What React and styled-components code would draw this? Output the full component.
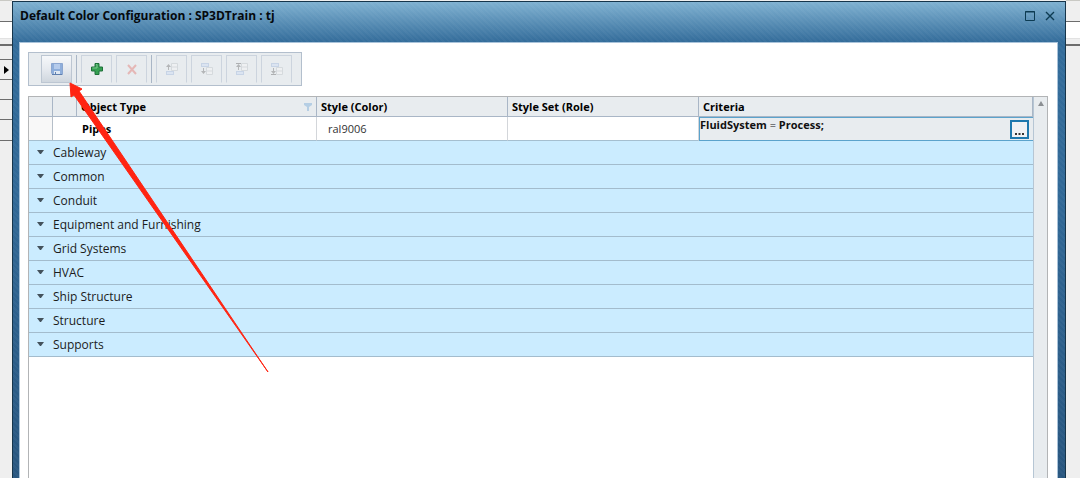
import React, { useState } from 'react';
import styled, { createGlobalStyle } from 'styled-components';

const GlobalStyle = createGlobalStyle`
  * { box-sizing: border-box; }
  body {
    margin: 0;
    background: #efefef;
    font-family: "Open Sans", "Noto Sans", sans-serif;
    font-size: 12px;
    color: #1c1c1c;
  }
  button { font-family: inherit; padding: 0; }
`;

const Desktop = styled.div`
  position: relative;
  display: flex;
  height: 100vh;
  overflow: hidden;
`;

const Gutter = styled.div`
  flex: none;
  width: ${props => props.width}px;
  border-top: 1px solid #c9c9c4;
`;

const GutterCell = styled.div`
  display: flex;
  align-items: center;
  justify-content: flex-end;
  padding-right: 3px;
  height: ${props => props.height}px;
  background: ${props => props.fill || '#efefef'};
  border-bottom: ${props => props.line || 1}px solid ${props => props.color || '#6d6d6d'};
`;

const Window = styled.main`
  flex: 1;
  min-width: 0;
  display: flex;
  flex-direction: column;
  margin-top: 1px;
  padding: 0 7px 0 6px;
  border: 1px solid #16354b;
  border-bottom: 0;
  background:
    repeating-linear-gradient(45deg, rgba(255, 255, 255, 0.03) 0 2px, transparent 2px 4px),
    linear-gradient(#7fb1d1 0, #336c9a 40px, #316896 200px, #28567f 100%);
`;

const TitleBar = styled.header`
  display: flex;
  align-items: flex-start;
  justify-content: space-between;
  height: 40px;
  flex: none;
  padding: 5px 3px 0 1px;
`;

const Title = styled.h1`
  margin: 0;
  font-size: 12px;
  line-height: 18px;
  font-weight: 700;
  color: #05090d;
`;

const WindowButtons = styled.div`
  display: flex;
  gap: 10px;
  padding-top: 4px;
`;

const WindowButton = styled.button`
  display: flex;
  border: 0;
  background: none;
`;

const Body = styled.section`
  flex: 1;
  min-height: 0;
  display: flex;
  flex-direction: column;
  gap: 10px;
  padding: 9px 9px 0 8px;
  background: #fff;
  border: 1px solid #a9c3da;
  border-bottom: 0;
`;

const Toolbar = styled.div`
  display: flex;
  align-self: flex-start;
  gap: 4px;
  height: 34px;
  padding: 2px 9px 2px 12px;
  background: #e8ecef;
  border: 1px solid #b3bfcd;
`;

const Separator = styled.span`
  width: 1px;
  background: #a9b6c6;
`;

const ToolButton = styled.button`
  display: flex;
  align-items: center;
  justify-content: center;
  width: 31px;
  border: 1px solid ${props => props.$active ? '#bcc6d2' : '#ccd4de'};
  border-bottom-color: ${props => props.$active ? '#bcc6d2' : '#e8ecef'};
  background: ${props => props.$active ? 'linear-gradient(#f6f8fa, #e6eaef 50%, #cfd6de)' : '#e8ecef'};
  svg { opacity: ${props => props.disabled ? 0.35 : 1}; }
`;

const GridFrame = styled.div`
  flex: 1;
  min-height: 0;
  display: flex;
  border: 1px solid #b2b4b6;
  border-bottom: 0;
`;

const GridScroll = styled.div`
  flex: 1;
  min-width: 0;
  overflow: hidden;
`;

const ScrollTrack = styled.div`
  flex: none;
  width: 14px;
  background: #e8ecef;
  border-left: 1px solid #b6c6d4;
`;

const ScrollUp = styled.button`
  display: flex;
  justify-content: center;
  width: 100%;
  padding-top: 4px;
  border: 0;
  background: none;
`;

const Table = styled.table`
  width: 100%;
  table-layout: fixed;
  border-collapse: separate;
  border-spacing: 0;
`;

const Col = styled.col`
  width: ${props => props.$w ? `${props.$w}px` : 'auto'};
`;

const Th = styled.th`
  height: 20px;
  padding: 0 4px;
  background: #e8ecef;
  border-right: 1px solid #a9b6c6;
  border-bottom: 1px solid #a9b6c6;
  text-align: left;
  font-size: 11px;
  line-height: 18px;
  color: #000;
`;

const HeadLabel = styled.span`
  display: flex;
  align-items: center;
  justify-content: space-between;
`;

const Td = styled.td`
  height: 24px;
  padding: 0 0 0 ${props => props.$pad || 0}px;
  background: ${props => props.$shade ? '#f8f8f8' : '#fff'};
  border-right: 1px solid ${props => props.$shade ? '#b5bec8' : '#d3d6da'};
  border-bottom: 1px solid #a5bfd0;
  font-size: 11px;
  line-height: 18px;
  font-weight: ${props => props.$bold ? 700 : 400};
  color: ${props => props.$bold ? '#000' : '#333'};
`;

const CriteriaTd = styled.td`
  height: 24px;
  padding: 0;
  background: #e8ecef;
  border: 1px solid #5ba3cc;
  border-right: 0;
`;

const Criteria = styled.div`
  display: flex;
  justify-content: space-between;
  height: 22px;
  padding-right: 4px;
  font-size: 11px;
  line-height: 14px;
  font-weight: 700;
  color: #111;
  span { font-weight: 400; }
`;

const MoreButton = styled.button`
  align-self: center;
  display: flex;
  align-items: flex-end;
  justify-content: center;
  width: 19px;
  height: 19px;
  padding-bottom: 2px;
  border: 2px solid #1c77ad;
  background: #eef1f4;
`;

const GroupTd = styled.td`
  height: 24px;
  padding: 0;
  background: #cbecff;
  border-bottom: 1px solid #a3bccd;
`;

const GroupButton = styled.button`
  display: flex;
  align-items: center;
  gap: 9px;
  width: 100%;
  height: 22px;
  padding-left: 8px;
  border: 0;
  background: none;
  text-align: left;
  font-size: 12px;
  line-height: 18px;
  color: #1c1c1c;
  svg { margin-bottom: 2px; }
`;

const Pointer = styled.svg`
  position: absolute;
  left: 0;
  top: 0;
  pointer-events: none;
`;

const groups = [
  'Cableway',
  'Common',
  'Conduit',
  'Equipment and Furnishing',
  'Grid Systems',
  'HVAC',
  'Ship Structure',
  'Structure',
  'Supports'
];

const SaveIcon = () => (
  <svg width="12" height="12" viewBox="0 0 12 12">
    <path d="M1 .5h10.5v11H2L.5 10V.5z" fill="#8eaedb" stroke="#8ba6d0" />
    <path d="M3 1h6v5H3z" fill="#b5cbeb" />
    <path d="M3 8h6v3H3z" fill="#dfe8f3" />
    <path d="M4 9h1v2H4zM1 11h10v1H1z" fill="#5f7fae" />
  </svg>
);

const AddIcon = () => (
  <svg width="12" height="12" viewBox="0 0 12 12">
    <path d="M4 .5h4V4h3.500v4H8v3.500H4V8H.5V4H4z" fill="#35a052" stroke="#1f713a" />
    <path d="M5 1.500h1V5H1.500" fill="none" stroke="#7cc98e" />
  </svg>
);

const DeleteIcon = () => (
  <svg width="10" height="11" viewBox="0 0 10 11">
    <path d="M1 1l8 9M9 1L1 10" fill="none" stroke="#e0584e" strokeWidth="2" />
  </svg>
);

// down: the blue block is above the list, edge: move to the very first or last place
const MoveIcon = ({ down, edge }) => {
  const listY = down ? 4.5 : .5;
  const blockY = down ? .5 : 8.5;
  return (
    <svg width="12" height="12" viewBox="0 0 12 12">
      <path
        d={`M5.500 ${listY}h6v7h-6zM5.500 ${listY + 3.5}h6`}
        fill="#fafafa"
        stroke="#b4b9be"
      />
      <rect x=".5" y={blockY} width="7" height="3" fill="#c4d7f5" stroke="#8ba8d6" />
      {down
        ? <path d="M2 5h1v3h2L2.500 11 0 8h2z" fill="#555" />
        : <path d="M2 7h1V4h2L2.500 1 0 4h2z" fill="#555" />}
      {edge && <path d={down ? 'M0 11.500h5' : 'M0 .5h5'} stroke="#444" />}
    </svg>
  );
};

const FilterIcon = () => (
  <svg width="8" height="8" viewBox="0 0 8 8">
    <path d="M0 0h8v2L5 4v4H3V4L0 2z" fill="#b5cee4" />
  </svg>
);

const App = () => {
  const [open, setOpen] = useState('');

  return (
    <Desktop>
      <GlobalStyle />
      <Gutter width={12}>
        <GutterCell height={21} />
        <GutterCell height={17} fill="#fff" color="#e2e2e2" />
        <GutterCell height={7} line={2} />
        <GutterCell height={14} />
        <GutterCell height={20}>
          <svg width="5" height="8" viewBox="0 0 5 8"><path d="M0 0l5 4-5 4z" fill="#000" /></svg>
        </GutterCell>
        <GutterCell height={20} />
        <GutterCell height={20} />
        <GutterCell height={21} />
      </Gutter>

      <Window>
        <TitleBar>
          <Title>Default Color Configuration : SP3DTrain : tj</Title>
          <WindowButtons>
            <WindowButton aria-label="Maximize">
              <svg width="10" height="10" viewBox="0 0 10 10">
                <path d="M.5 .5h9v9h-9zM0 1h10" fill="none" stroke="#0d3b52" />
              </svg>
            </WindowButton>
            <WindowButton aria-label="Close">
              <svg width="10" height="10" viewBox="0 0 10 10">
                <path d="M1 1l8 8M9 1L1 9" fill="none" stroke="#0d3b52" strokeWidth="1.400" />
              </svg>
            </WindowButton>
          </WindowButtons>
        </TitleBar>

        <Body>
          <Toolbar role="toolbar">
            <ToolButton $active aria-label="Save"><SaveIcon /></ToolButton>
            <Separator />
            <ToolButton aria-label="Add"><AddIcon /></ToolButton>
            <ToolButton disabled aria-label="Delete"><DeleteIcon /></ToolButton>
            <Separator />
            <ToolButton disabled aria-label="Move up"><MoveIcon /></ToolButton>
            <ToolButton disabled aria-label="Move down"><MoveIcon down /></ToolButton>
            <ToolButton disabled aria-label="Move to top"><MoveIcon edge /></ToolButton>
            <ToolButton disabled aria-label="Move to bottom"><MoveIcon down edge /></ToolButton>
          </Toolbar>

          <GridFrame>
            <GridScroll>
              <Table>
                <colgroup>
                  <Col $w={24} />
                  <Col $w={24} />
                  <Col $w={240} />
                  <Col $w={191} />
                  <Col $w={191} />
                  <Col />
                </colgroup>
                <thead>
                  <tr>
                    <Th />
                    <Th />
                    <Th><HeadLabel>Object Type <FilterIcon /></HeadLabel></Th>
                    <Th>Style (Color)</Th>
                    <Th>Style Set (Role)</Th>
                    <Th>Criteria</Th>
                  </tr>
                </thead>
                <tbody>
                  <tr>
                    <Td $shade />
                    <Td colSpan={2} $bold $pad={29}>Pipes</Td>
                    <Td $pad={11}>ral9006</Td>
                    <Td />
                    <CriteriaTd>
                      <Criteria>
                        <div>FluidSystem <span>=</span> Process;</div>
                        <MoreButton aria-label="Edit criteria">
                          <svg width="9" height="2" viewBox="0 0 9 2">
                            <path d="M0 0h2v2H0zM3.500 0h2v2h-2zM7 0h2v2H7z" fill="#333" />
                          </svg>
                        </MoreButton>
                      </Criteria>
                    </CriteriaTd>
                  </tr>
                  {groups.map(name => (
                    <tr key={name}>
                      <GroupTd colSpan={6}>
                        <GroupButton
                          aria-expanded={open === name}
                          onClick={() => setOpen(open === name ? '' : name)}
                        >
                          <svg width="7" height="4" viewBox="0 0 7 4">
                            <path d="M0 0h7L4 4H3z" fill="#44525c" />
                          </svg>
                          {name}
                        </GroupButton>
                      </GroupTd>
                    </tr>
                  ))}
                </tbody>
              </Table>
            </GridScroll>
            <ScrollTrack>
              <ScrollUp aria-label="Scroll up">
                <svg width="6" height="5" viewBox="0 0 6 5"><path d="M3 0l3 5H0z" fill="#8b8f93" /></svg>
              </ScrollUp>
            </ScrollTrack>
          </GridFrame>
        </Body>
      </Window>

      <Gutter width={14}>
        <GutterCell height={21} />
        <GutterCell height={17} fill="#fff" color="#e2e2e2" />
        <GutterCell height={7} line={2} />
      </Gutter>

      <Pointer width="280" height="380" viewBox="0 0 280 380">
        <path d="M70 83L82 89L79 91L268 372L74 95L71 97z" fill="#ff2412" stroke="#ff2412" strokeLinejoin="round" />
      </Pointer>
    </Desktop>
  );
};

export default App;
